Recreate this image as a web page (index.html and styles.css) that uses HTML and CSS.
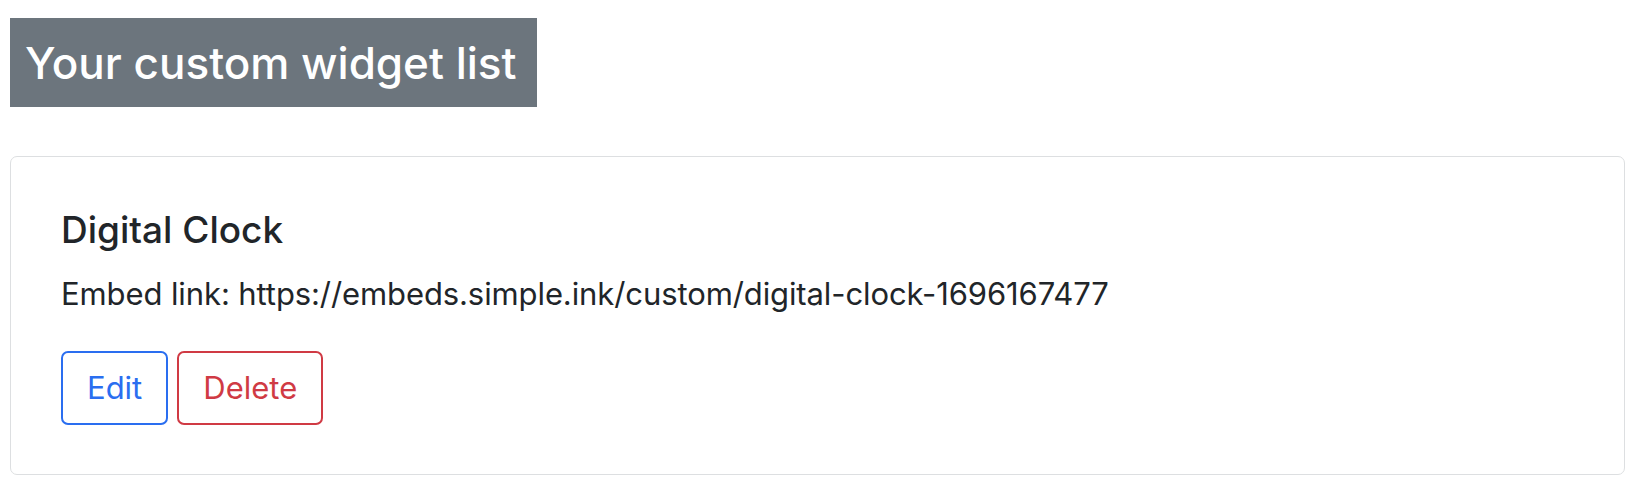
FILE: index.html
```html
<!DOCTYPE html>
<html lang="en">
<head>
<meta charset="utf-8">
<title>Your custom widget list</title>
<link rel="stylesheet" href="styles.css">
</head>
<body>
<main class="page">
  <h1 class="page-title">Your custom widget list</h1>
  <section class="widget-card">
    <h2 class="widget-name">Digital Clock</h2>
    <p class="widget-link">Embed link: https://embeds.simple.ink/custom/digital-clock-1696167477</p>
    <div class="widget-actions">
      <button class="btn btn-edit" type="button">Edit</button>
      <button class="btn btn-delete" type="button">Delete</button>
    </div>
  </section>
</main>
</body>
</html>
```
FILE: styles.css
```css
* { box-sizing: border-box; }
html, body { margin: 0; padding: 0; background: #fff; }
body {
  font-family: Inter, "Noto Sans", "Liberation Sans", sans-serif;
  color: #212529;
}
.page {
  padding: 18px 15px 0 10px;
  display: flex;
  flex-direction: column;
  align-items: flex-start;
}
.page-title {
  margin: 0;
  display: inline-block;
  background: #6c757d;
  color: #fff;
  font-size: 44px;
  font-weight: 500;
  line-height: 88px;
  height: 89px;
  padding: 1px 20px 0 15px;
}
.widget-card {
  align-self: stretch;
  margin-top: 49px;
  border: 1px solid #dddfe1;
  border-radius: 7px;
  padding: 53px 48px 49px 50px;
}
.widget-name {
  margin: 0;
  font-size: 37px;
  font-weight: 500;
  line-height: 40px;
}
.widget-link {
  margin: 24px 0 0;
  font-size: 31px;
  line-height: 40px;
  letter-spacing: -0.1px;
}
.widget-actions {
  display: flex;
  gap: 9px;
  margin-top: 37px;
}
.btn {
  font-family: inherit;
  font-size: 31px;
  line-height: 46px;
  padding: 12px 24px;
  background: #fff;
  border: 2px solid;
  border-radius: 7px;
}
.btn-edit { color: #2a6ef0; border-color: #2a6ef0; }
.btn-delete { color: #d03a44; border-color: #d03a44; }
```
